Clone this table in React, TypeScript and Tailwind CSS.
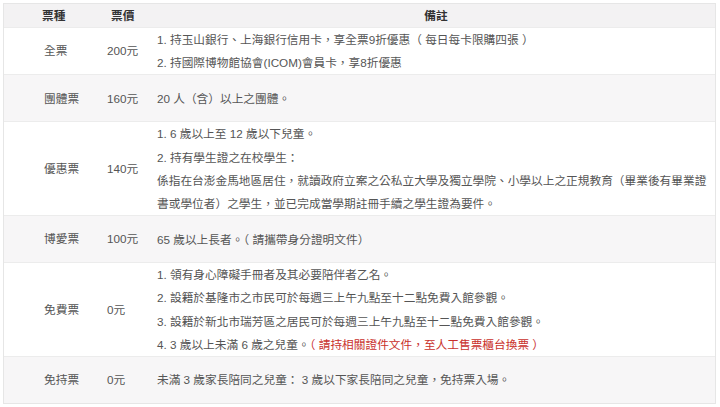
import React from 'react';

type Row = {
    name: string;
    price: string;
    notes: React.ReactNode[];
    shaded: boolean;
};

const rows: Row[] = [
    {
        name: '全票',
        price: '200元',
        notes: [
            '1. 持玉山銀行、上海銀行信用卡，享全票9折優惠（ 每日每卡限購四張 ）',
            '2. 持國際博物館協會(ICOM)會員卡，享8折優惠',
        ],
        shaded: false,
    },
    {
        name: '團體票',
        price: '160元',
        notes: ['20 人（含）以上之團體。'],
        shaded: true,
    },
    {
        name: '優惠票',
        price: '140元',
        notes: [
            '1. 6 歲以上至 12 歲以下兒童。',
            '2. 持有學生證之在校學生：',
            '係指在台澎金馬地區居住，就讀政府立案之公私立大學及獨立學院、小學以上之正規教育（畢業後有畢業證',
            '書或學位者）之學生，並已完成當學期註冊手續之學生證為要件。',
        ],
        shaded: false,
    },
    {
        name: '博愛票',
        price: '100元',
        notes: ['65 歲以上長者。（ 請攜帶身分證明文件）'],
        shaded: true,
    },
    {
        name: '免費票',
        price: '0元',
        notes: [
            '1. 領有身心障礙手冊者及其必要陪伴者乙名。',
            '2. 設籍於基隆市之市民可於每週三上午九點至十二點免費入館參觀。',
            '3. 設籍於新北市瑞芳區之居民可於每週三上午九點至十二點免費入館參觀。',
            <>
                4. 3 歲以上未滿 6 歲之兒童。
                <span className="text-[#c9302c]">（ 請持相關證件文件，至人工售票櫃台換票 ）</span>
            </>,
        ],
        shaded: false,
    },
    {
        name: '免持票',
        price: '0元',
        notes: ['未滿 3 歲家長陪同之兒童： 3 歲以下家長陪同之兒童，免持票入場。'],
        shaded: true,
    },
];

export default function App() {
    return (
        <div className="w-[720px] h-[407px] bg-white pl-[3px] pt-[3px] pr-[4px] font-['Liberation_Sans','Noto_Sans_CJK_TC',sans-serif] text-[11.7px] text-[#555]">
            <div className="border border-[#e6e6e6] overflow-hidden">
                {/* Header */}
                <div className="grid grid-cols-[103px_50px_minmax(0,1fr)] h-[23px] items-center bg-[#f3f2f3] font-bold text-[#333]">
                    <div className="pl-[38px]">票種</div>
                    <div className="pl-[4px]">票價</div>
                    <div className="text-center">備註</div>
                </div>

                {rows.map((row) => (
                    <div
                        key={row.name}
                        className={`grid grid-cols-[103px_50px_minmax(0,1fr)] min-h-[47px] items-center border-t border-[#ececec] ${row.shaded ? 'bg-[#f7f6f7]' : 'bg-white'}`}
                    >
                        <div className="pl-[40px]">{row.name}</div>
                        <div>{row.price}</div>
                        <div className="flex flex-col">
                            {row.notes.map((note, idx) => (
                                <div key={idx} className="leading-[23.2px] whitespace-nowrap">
                                    {note}
                                </div>
                            ))}
                        </div>
                    </div>
                ))}
            </div>
        </div>
    );
}
